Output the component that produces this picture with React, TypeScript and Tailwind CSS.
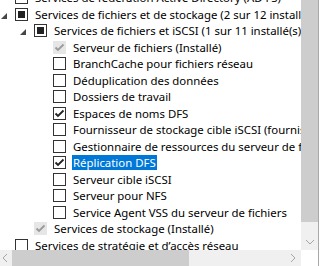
import React from "react";

type Row = {
  level: number;
  text: string;
  expander?: boolean;
  state?: "none" | "checked" | "mixed" | "installed";
  selected?: boolean;
};

const rows: Row[] = [
  { level: 1, text: "Services de fédération Active Directory (AD FS)" },
  { level: 1, text: "Services de fichiers et de stockage (2 sur 12 installé(s))", expander: true, state: "mixed" },
  { level: 2, text: "Services de fichiers et iSCSI (1 sur 11 installé(s))", expander: true, state: "mixed" },
  { level: 3, text: "Serveur de fichiers (Installé)", state: "installed" },
  { level: 3, text: "BranchCache pour fichiers réseau" },
  { level: 3, text: "Déduplication des données" },
  { level: 3, text: "Dossiers de travail" },
  { level: 3, text: "Espaces de noms DFS", state: "checked" },
  { level: 3, text: "Fournisseur de stockage cible iSCSI (fournisseur de matériel VDS et VSS)" },
  { level: 3, text: "Gestionnaire de ressources du serveur de fichiers" },
  { level: 3, text: "Réplication DFS", state: "checked", selected: true },
  { level: 3, text: "Serveur cible iSCSI" },
  { level: 3, text: "Serveur pour NFS" },
  { level: 3, text: "Service Agent VSS du serveur de fichiers" },
  { level: 2, text: "Services de stockage (Installé)", state: "installed" },
  { level: 1, text: "Services de stratégie et d’accès réseau" },
];

const indent: Record<number, string> = {
  1: "pl-[15px]",
  2: "pl-[34px]",
  3: "pl-[53px]",
};

function Check({ color }: { color: string }) {
  return (
    <svg width="11" height="11" viewBox="0 0 11 11" className="block">
      <path d="M1.5 5.5 L4 8 L9.5 2.5" fill="none" stroke={color} strokeWidth="1.8" />
    </svg>
  );
}

function Box({ state = "none" }: { state?: Row["state"] }) {
  if (state === "installed") {
    return (
      <div className="w-[13px] h-[13px] bg-[#e6e6e6] flex items-center justify-center shrink-0">
        <Check color="#9a9a9a" />
      </div>
    );
  }
  return (
    <div className="w-[13px] h-[13px] border border-[#333] bg-white flex items-center justify-center shrink-0">
      {state === "mixed" && <div className="w-[7px] h-[7px] bg-[#222]" />}
      {state === "checked" && <Check color="#222" />}
    </div>
  );
}

function Expander() {
  return (
    <svg width="6" height="6" viewBox="0 0 6 6" className="absolute left-[-14px] top-[5px]">
      <polygon points="6,0 6,6 0,6" fill="#454545" />
    </svg>
  );
}

function Chevron({ dir }: { dir: "down" | "left" | "right" }) {
  const d =
    dir === "down" ? "M1 2 L5 6 L9 2" : dir === "left" ? "M6 0 L2 4 L6 8" : "M2 0 L6 4 L2 8";
  const w = dir === "down" ? 10 : 8;
  const h = 8;
  return (
    <svg width={w} height={h} viewBox={`0 0 ${w} ${h}`} className="block">
      <path d={d} fill="none" stroke="#a6a6a6" strokeWidth="1" />
    </svg>
  );
}

export default function App() {
  return (
    <div className="w-[329px] h-[266px] flex bg-white overflow-hidden" style={{ fontFamily: '"Noto Sans", sans-serif' }}>
      <div className="w-[318px] flex flex-col">
        <div className="flex flex-1 min-h-0">
          <div className="flex-1 overflow-hidden">
            <div className="-mt-[10.75px]">
              {rows.map((r, i) => (
                <div key={i} className={`h-[16.5px] flex items-center ${indent[r.level]}`}>
                  <div className="relative flex items-center">
                    {r.expander && <Expander />}
                    <Box state={r.state} />
                  </div>
                  <span
                    className={`ml-[6px] px-[1px] whitespace-nowrap text-[11.4px] leading-[15px] ${
                      r.selected ? "bg-[#0078d7] text-white" : "text-black"
                    }`}
                  >
                    {r.text}
                  </span>
                </div>
              ))}
            </div>
          </div>
          <div className="w-[17px] flex flex-col bg-[#f0f0f0]">
            <div className="h-[222px] bg-[#cdcdcd]" />
            <div className="flex-1" />
            <div className="h-[17px] flex items-center justify-center">
              <Chevron dir="down" />
            </div>
          </div>
        </div>
        <div className="h-[16px] flex">
          <div className="w-[301px] flex items-center bg-[#f0f0f0]">
            <div className="w-[12px] flex justify-start pl-[1px]">
              <Chevron dir="left" />
            </div>
            <div className="w-[177px] h-[16px] bg-[#cdcdcd]" />
            <div className="flex-1" />
            <div className="w-[17px] flex justify-center">
              <Chevron dir="right" />
            </div>
          </div>
          <div className="flex-1 bg-white" />
        </div>
      </div>
      <div className="w-px bg-[#a9a9a9]" />
      <div className="flex-1 bg-white" />
    </div>
  );
}
